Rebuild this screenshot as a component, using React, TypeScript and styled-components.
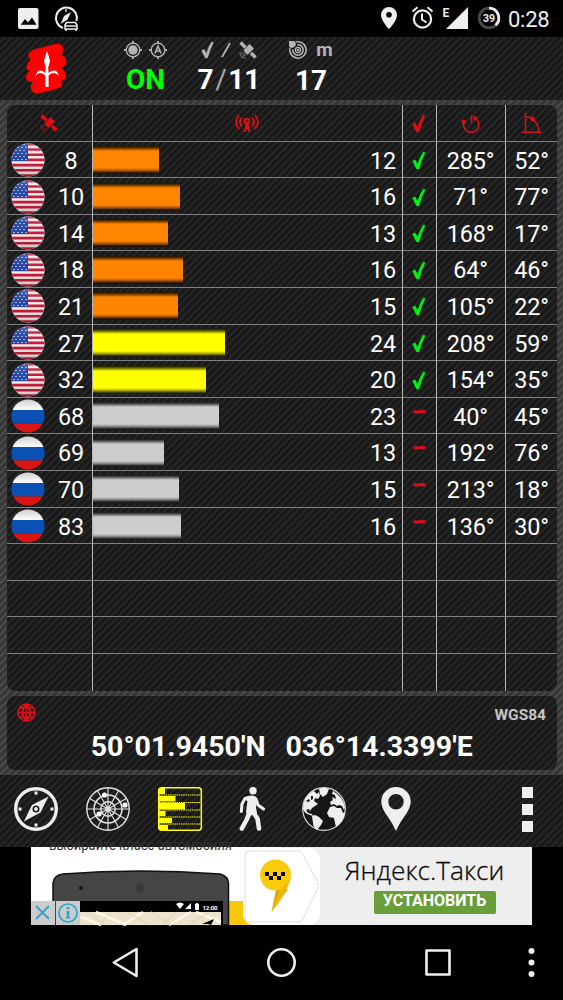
import React from 'react';
import styled, { createGlobalStyle, css } from 'styled-components';

const GlobalStyle = createGlobalStyle`
  * { box-sizing: border-box; }
  body { margin: 0; background: #000; font-family: Roboto, "Noto Sans", sans-serif; color: #fff; }
  svg { display: block; flex: none; overflow: visible; }
`;

const darkStripes = css`
  background: repeating-linear-gradient(135deg, #171717 0, #1b1b1b 2.2px, #292929 3.6px, #272727 4.2px, #171717 5.2px);
`;
const greyStripes = css`
  background: repeating-linear-gradient(135deg, #343434 0, #383838 2.2px, #4e4e4e 3.6px, #4c4c4c 4.2px, #343434 5.2px);
`;

const Screen = styled.div`
  width: 563px;
  height: 1000px;
  display: flex;
  flex-direction: column;
  overflow: hidden;
  background: #000;
`;

const StatusBar = styled.header`
  height: 37px;
  display: flex;
  justify-content: space-between;
  padding: 0 13.5px 0 18px;
`;
const StatusGroup = styled.div<{ $gap: number }>`
  display: flex;
  align-items: center;
  gap: ${(p) => p.$gap}px;
`;
const Clock = styled.span`
  font-size: 22px;
  line-height: 37px;
  letter-spacing: -0.2px;
  padding-top: 2px;
  color: #eee;
`;

const Summary = styled.section`
  ${darkStripes}
  height: 63px;
  display: grid;
  grid-template-columns: 94px 103px 64px 100px;
`;
const LogoCell = styled.div`
  padding: 6px 0 0 25px;
`;
const Stat = styled.div`
  display: flex;
  flex-direction: column;
  align-items: center;
`;
const StatIcons = styled.div<{ $gap: number }>`
  height: 25px;
  display: flex;
  align-items: center;
  justify-content: center;
  gap: ${(p) => p.$gap}px;
  color: #b4b4b4;
  font: bold 19px/25px Roboto, sans-serif;
`;
const StatValue = styled.div<{ $on?: boolean; $drop?: number }>`
  font-weight: bold;
  font-size: 28px;
  line-height: 35px;
  white-space: nowrap;
  padding-top: ${(p) => p.$drop ?? 0}px;
  color: ${(p) => (p.$on ? '#0f0' : '#fff')};
`;
const Slash = styled.span`
  font-weight: 400;
  color: #aaa;
  margin: 0 1.5px;
`;

const Body = styled.main`
  ${greyStripes}
  height: 675px;
  padding: 5px 6px 5px 6.5px;
  display: flex;
  flex-direction: column;
  gap: 5px;
`;
const Panel = styled.section<{ $height: number }>`
  ${darkStripes}
  height: ${(p) => p.$height}px;
  border-radius: 8px;
  overflow: hidden;
`;
const Row = styled.div`
  height: 36.6px;
  display: grid;
  grid-template-columns: 86px 310px 34px 69px 51px;
  border-bottom: 1px solid #808080;
  &:last-child { border-bottom: 0; }
`;
const Cell = styled.div`
  display: flex;
  align-items: center;
  justify-content: center;
  border-right: 1px solid #b8b8b8;
  font-size: 23.4px;
  line-height: 36px;
  letter-spacing: -0.2px;
  min-width: 0;
  padding-top: 1px;
  &:last-child { border-right: 0; padding-left: 1px; }
`;
const IdCell = styled(Cell)`
  justify-content: flex-start;
  padding: 0 0 0 4px;
`;
const SatId = styled.span`
  flex: none;
  width: 53px;
  text-align: center;
  padding-top: 1px;
`;
const SignalCell = styled(Cell)`
  justify-content: space-between;
  padding: 0 5.5px 0 0;
`;
const SignalValue = styled.span`
  padding-top: 1px;
`;
const tones: Record<string, string> = { orange: '#ff8400', yellow: '#ffff00', grey: '#cdcdcd' };
const Bar = styled.div<{ $tone: string }>`
  height: 28px;
  background: linear-gradient(
    rgba(0, 0, 0, 0.9) 0, rgba(0, 0, 0, 0.6) 2px, rgba(0, 0, 0, 0.2) 4px, transparent 5px,
    transparent 22px, rgba(0, 0, 0, 0.25) 24px, rgba(0, 0, 0, 0.75) 26.5px, rgba(0, 0, 0, 0.95) 28px
  ), ${(p) => tones[p.$tone]};
`;

const PositionTop = styled.div`
  display: flex;
  justify-content: space-between;
  padding: 7px 11px 0 10.5px;
  height: 32px;
  color: #c4c4c4;
  font: bold 15.5px/24px Roboto, sans-serif;
`;
const Coordinates = styled.div`
  display: flex;
  justify-content: center;
  gap: 20px;
  font-weight: bold;
  font-size: 28.5px;
  line-height: 38px;
  white-space: nowrap;
`;

const Toolbar = styled.nav`
  ${darkStripes}
  height: 72px;
  display: flex;
  justify-content: space-between;
  padding: 0 30px 4px 0;
  align-items: center;
`;
const Tools = styled.div`
  display: flex;
`;
const Tool = styled.div`
  width: 72px;
  height: 44px;
  display: flex;
  justify-content: center;
  align-items: center;
`;
const More = styled.div`
  width: 11px;
  display: flex;
  flex-direction: column;
  gap: 6px;
`;
const MoreDot = styled.i`
  height: 11px;
  background: #eee;
`;

const Ad = styled.aside`
  height: 78px;
  margin: 0 31px;
  display: flex;
  background: #fff;
`;
const AdArt = styled.div`
  width: 289px;
`;
const AdCopy = styled.div`
  width: 212px;
  background: #eee;
  display: flex;
  flex-direction: column;
  align-items: center;
  color: #0a0a0a;
`;
const AdTitle = styled.div`
  font: 300 26.3px/36px "Open Sans", sans-serif;
  -webkit-text-stroke: 0.3px #0a0a0a;
  white-space: nowrap;
  margin: 5px 3px 2.5px 0;
`;
const Install = styled.div`
  width: 122px;
  height: 23px;
  margin-left: 17px;
  border-radius: 2px;
  background: #689f38;
  color: #fff;
  text-align: center;
  font: bold 16px/20px Roboto, sans-serif;
`;
const SystemNav = styled.footer`
  height: 75px;
`;

const UsFlag = () => (
  <svg width="34" height="34" viewBox="0 0 34 34">
    <defs>
      <clipPath id="us"><circle cx="17" cy="17" r="16.6" /></clipPath>
      <linearGradient id="shade" x2="0" y2="1">
        <stop offset="0" stopColor="#fff" stopOpacity=".2" />
        <stop offset=".5" stopOpacity="0" />
        <stop offset="1" stopOpacity=".2" />
      </linearGradient>
    </defs>
    <g clipPath="url(#us)">
      <path fill="#f6f2f2" d="M0 0h34v34H0z" />
      {[0, 1, 2, 3, 4, 5, 6].map((i) => <path key={i} fill="#cc1c3c" d={`M0 ${i * 5.2}h34v2.6H0z`} />)}
      <path fill="#2145a4" d="M0 0h17v18H0z" />
      {[2, 5, 8, 11, 14, 17].map((y, r) =>
        [1, 5, 9, 13].map((x) => <circle key={`${x}-${y}`} cx={x + (r % 2) * 2} cy={y - 0.5} r=".75" fill="#dfe8ff" />))}
      <path fill="url(#shade)" d="M0 0h34v34H0z" />
    </g>
  </svg>
);
const RuFlag = () => (
  <svg width="34" height="34" viewBox="0 0 34 34">
    <defs>
      <clipPath id="ru"><circle cx="17" cy="17" r="16.6" /></clipPath>
      <linearGradient id="ruw" x2="0" y2="1"><stop offset="0" stopColor="#ccc" /><stop offset="1" stopColor="#fff" /></linearGradient>
    </defs>
    <g clipPath="url(#ru)">
      <path fill="url(#ruw)" d="M0 0h34v11H0z" />
      <path fill="#0b50b4" d="M0 11h34v13.500H0z" />
      <path fill="#dd1414" d="M0 24.500h34v10H0z" />
    </g>
  </svg>
);
const Check = ({ color, size = 19 }: { color: string; size?: number }) => (
  <svg width={size * 0.72} height={size} viewBox="0 0 14 19.500">
    <path fill={color} stroke={color} strokeWidth=".3" strokeLinejoin="round" d="M.6 10.600Q1.600 9 3.500 9.200L5.700 13.600Q7.800 6.500 11.300 1.200Q13 .6 13.500 1.800Q9.600 9 7.400 18Q5.400 19.200 4.300 18Z" />
  </svg>
);
const Dash = () => (
  <svg width="13" height="20" viewBox="0 0 13 20"><path fill="#d81016" d="M.6 3.400L12 3Q13.400 4.500 12.200 6.200L1 6.400Q-.3 4.900 .6 3.400Z" /></svg>
);
const Satellite = ({ color }: { color: string }) => (
  <svg width="18" height="18" viewBox="0 0 18 18" fill="none" stroke={color}>
    <path strokeWidth="3.400" d="M1.500 1.500L6.500 6.500M12 12L16.500 16.500" />
    <path fill={color} stroke="none" d="M10.500 3L15 7.500L8.500 14L4.500 9.500Z" />
    <path strokeWidth="1.200" opacity=".5" d="M1 11Q1 17 7 17M3 11Q3.500 14.500 7 15M5 11.500L6.500 13" />
  </svg>
);
const Target = ({ auto }: { auto?: boolean }) => (
  <svg width="18" height="18" viewBox="0 0 18 18" fill="none" stroke="#b4b4b4">
    <circle cx="9" cy="9" r="6.800" strokeWidth="1.300" />
    <path strokeWidth="1.800" d="M9 0v3M9 15v3M0 9h3M15 9h3" />
    {auto ? <path strokeWidth="1.600" d="M5.900 12.500L9 5.200L12.100 12.500M7.200 10h3.600" /> : <circle cx="9" cy="9" r="4.700" fill="#b4b4b4" stroke="none" />}
  </svg>
);
const Accuracy = () => (
  <svg width="18" height="18" viewBox="0 0 18 18" fill="none" stroke="#b4b4b4">
    <path strokeWidth="1.500" d="M7 1A8.200 8.200 0 1 1 1 7" />
    <path strokeWidth="1.500" d="M8.500 3.800A5.200 5.200 0 1 1 3.800 8.500" />
    <circle cx="9" cy="9" r="2.600" strokeWidth="1.200" />
    <circle cx="9" cy="9" r="1" fill="#b4b4b4" />
    <path fill="#b4b4b4" stroke="none" d="M0 0h5.500l1.500 2.500-.5 2-2 2-3 .5L0 5Z" />
  </svg>
);
const Logo = () => (
  <svg width="43" height="51" viewBox="0 0 43 51">
    <path fill="#f00" d="M5 9Q8 6 15 5L30 1Q38 0 38 6L37 12Q43 15 41 20Q40 23 36 25Q42 28 41 34Q40 37 36 38Q39 43 34 45L16 50Q8 52 6 46Q5 43 8 39Q0 39 1 33Q2 30 5 28Q0 27 2 22Q3 18 6 17Q1 12 5 9Z" />
    <path fill="#fff" d="M22 8Q23.500 12 25 18L23.200 24.500L23.600 30Q31 24 34 33Q29 27.500 23.600 32.500V44H20.400V32.500Q14 27.500 10.500 33Q13 24 20.400 30L20.800 24.500L19 18Q20.500 12 22 8Z" />
  </svg>
);

const PictureIcon = () => (
  <svg width="21" height="21" viewBox="0 0 21 21">
    <rect width="20.500" height="21" rx="2" fill="#eee" />
    <path d="M2.800 16.800L7 11l3 3.500 4-5 4.500 7.300z" />
  </svg>
);
const CompassCar = () => (
  <svg width="25" height="25" viewBox="0 0 25 25" fill="none" stroke="#eee">
    <path strokeWidth="2" d="M9 22A10.500 10.500 0 1 1 22.500 15" />
    <path fill="#eee" stroke="none" d="M17 6L13.500 13.500L6.500 18L10 10Z" />
    <path strokeWidth="1.300" d="M12 3v3" />
    <path strokeWidth="1.500" d="M11 19l1.500-2.500h9L23 19v4H11zM12 23v2M22 23v2M11 20h12" />
  </svg>
);
const StatusIcons = () => (
  <svg width="119" height="25" viewBox="381 7 119 25" fill="#eee">
    <path fillRule="evenodd" d="M389 8a8 8 0 0 0-8 8c0 6 8 14 8 14s8-8 8-14a8 8 0 0 0-8-8zm0 5a2.800 2.800 0 1 1 0 5.600 2.800 2.800 0 0 1 0-5.600z" />
    <circle cx="422.500" cy="20" r="8.600" fill="none" stroke="#eee" strokeWidth="2.200" />
    <path fill="none" stroke="#eee" strokeWidth="2" d="M412.500 12.500l5-4.200M432.500 12.500l-5-4.200M422 14.500v6l4.500 3" />
    <text x="442.500" y="17.500" fontSize="12" fontWeight="bold">E</text>
    <path d="M468 8v22h-22z" />
    <circle cx="489" cy="19" r="9.800" fill="none" stroke="#484848" strokeWidth="2.800" />
    <path fill="none" stroke="#eee" strokeWidth="2.800" d="M489 9.200A9.800 9.800 0 0 1 495.500 26.300" />
    <text x="489" y="23" fontSize="10.500" fontWeight="bold" textAnchor="middle">39</text>
  </svg>
);

const Antenna = () => (
  <svg width="24" height="19" viewBox="0 0 24 19" fill="none" stroke="#e60c14" strokeWidth="1.800">
    <path d="M4 1Q-2 8 4 15M7 3.500Q3 8 7 12.500M20 1Q26 8 20 15M17 3.500Q21 8 17 12.500M12 8L9.500 18M12 8L14.500 18M10.500 14h3" />
    <circle cx="12" cy="7" r="2.400" />
  </svg>
);
const Azimuth = () => (
  <svg width="19" height="19" viewBox="0 0 19 19" fill="none" stroke="#c9141a" strokeWidth="1.700">
    <path d="M3 8A7.700 7.700 0 1 0 15.500 5M10.500 1v8" />
    <circle cx="2.800" cy="8" r="2.200" fill="#e60c14" stroke="none" />
    <path fill="#e60c14" stroke="none" d="M12 1.500l5 2.500-4 3z" />
  </svg>
);
const Elevation = () => (
  <svg width="20" height="21" viewBox="0 0 20 21" fill="none" stroke="#c9141a" strokeWidth="1.600">
    <path d="M3.500 0v21M0 19.300h20M10 5.500Q16 10 17 19M3.500 4q4-1 6.500 1.500" />
    <circle cx="10.500" cy="6" r="2.300" fill="#e60c14" stroke="none" />
  </svg>
);
const RedGlobe = () => (
  <svg width="19" height="19" viewBox="0 0 19 19" fill="none" stroke="#e01018" strokeWidth="1.500">
    <circle cx="9.500" cy="9.500" r="8.500" />
    <path d="M9.500 1v17M1 9.500h17M3 4.800h13M3 14.200h13M9.500 1Q1.500 9.500 9.500 18M9.500 1Q17.500 9.500 9.500 18" />
  </svg>
);

const Compass = () => (
  <svg width="44" height="44" viewBox="0 0 44 44" fill="none" stroke="#eee">
    <circle cx="22" cy="22" r="20.300" strokeWidth="3.400" />
    <path strokeWidth="3" d="M22 4.500v3M22 36.500v3M4.500 22h3M36.500 22h3" />
    <path fill="#eee" stroke="none" d="M34.500 9.500L26.500 25.500L9.800 34.500L18 18Z" />
    <circle cx="22" cy="22" r="2.700" fill="#eee" stroke="#1c1c1c" strokeWidth="1.600" />
  </svg>
);
const Radar = () => (
  <svg width="44" height="44" viewBox="0 0 44 44" fill="none" stroke="#e4e4e4" strokeWidth="1.100">
    <circle cx="22" cy="22" r="21.200" strokeWidth="1.400" /><circle cx="22" cy="22" r="14" strokeWidth="1.500" /><circle cx="22" cy="22" r="7.200" strokeWidth="1.500" />
    {[0, 30, 60, 90, 120, 150].map((a) => <path key={a} d="M22 1v42" transform={`rotate(${a} 22 22)`} />)}
    <circle cx="22" cy="22" r="2.800" fill="#ddd" stroke="none" />
    <circle cx="18.500" cy="8" r="2.600" fill="#fff" stroke="none" /><circle cx="39" cy="18" r="2.600" fill="#fff" stroke="none" /><circle cx="13" cy="27" r="2.600" fill="#fff" stroke="none" />
  </svg>
);
const BarsIcon = () => (
  <svg width="44" height="44" viewBox="0 0 44 44" fill="none" stroke="#ff0">
    <rect x=".7" y=".7" width="42.600" height="42.600" rx="3" strokeWidth="1.500" />
    <path strokeDasharray="1.500 .7" strokeWidth="1.100" d="M1 8h42M1 15.500h42M1 23h42M1 30h42M1 37h42" />
    <path fill="#ff0" stroke="none" d="M1 1h6v6H1zM1 9h16.500v5.500H1zM1 16h26v6.500H1zM1 24h6.500v5H1zM1 31h13v5H1zM1 38h9v5H1z" />
  </svg>
);
const Walker = () => (
  <svg width="26" height="44" viewBox="0 0 26 44" fill="none" stroke="#eee" strokeLinecap="round" strokeLinejoin="round">
    <circle cx="14" cy="3.700" r="3.700" fill="#eee" stroke="none" />
    <path fill="#eee" strokeWidth="2" d="M6 11Q9 9.500 13 9.500Q16 9.500 17 12L16 21L17 26L9 28L8 25L9.500 14Z" />
    <path strokeWidth="3" d="M6 11.500L3 17L2.300 24.500M17 12L19 18L24.500 22" />
    <path strokeWidth="4.600" d="M10 27L7.500 33L2.800 41.500M14.500 26L18.500 31.500L20 41.500" />
  </svg>
);
const Globe = () => (
  <svg width="44" height="44" viewBox="0 0 44 44">
    <circle cx="22" cy="22" r="21.300" fill="#161616" stroke="#d8d8d8" strokeWidth="1.200" />
    <path fill="#eee" d="M1 22Q1 12 8 6L12 4L15 7L17 5L18 9L16 12L13 11L12 14L16 17L13 19L10 21L8 24L7 22L4 23L6 26L10 27L11 29L8 28Q3 27 1 22Z" />
    <path fill="#eee" d="M17 1.500Q22 0 27 2L25 7L21 10L18 7Z" />
    <path fill="#eee" d="M10 29L13 28L17 30L21 34L19 38L15 43Q11 40 11 36Z" />
    <path fill="#eee" d="M31 4Q41 10 43 20L42 23L40 19L37 18L35 19L32 17L29 18L28 15L31 13L30 10L34 12L33 8L30 7Z" />
    <path fill="#eee" d="M28 20L32 19L35 21L39 21L41 26L43 25Q42 35 34 40L33 36L32 31L27 30L25 26Z" />
    <path fill="#161616" d="M4 14l3-2 1 2-2 1zM9 9l2 0 0 3-2 1z" />
  </svg>
);
const Pin = () => (
  <svg width="30" height="44" viewBox="0 0 30 44">
    <path fill="#eee" fillRule="evenodd" d="M15 0A14.700 14.700 0 0 0 .3 14.700C.3 24 9 30 15 44C21 30 29.700 24 29.700 14.700A14.700 14.700 0 0 0 15 0ZM15 7a7.700 7.700 0 1 1 0 15.400A7.700 7.700 0 0 1 15 7Z" />
  </svg>
);

const AdPicture = () => (
  <svg width="289" height="78" viewBox="0 0 289 78">
    <text x="18" y="2.500" fontSize="14.200" textLength="183" lengthAdjust="spacingAndGlyphs" fill="#333" fontFamily="Roboto">выбирайте класс автомобиля</text>
    <path fill="#f9c80c" d="M198 54h91v24h-91z" />
    <path fill="#eee" d="M250 0h39v78h-39z" />
    <path fill="#454545" stroke="#111" strokeWidth="1.500" d="M22 78V36Q23 28 32 27Q108 21 189 27Q197 29 197.500 36V78Z" />
    <circle cx="50" cy="41" r="2" fill="#151515" /><circle cx="109" cy="41" r="4" fill="#383838" />
    <path d="M30 54h162v24H30z" />
    <path fill="#ece3cd" d="M48 65h142v13H48z" />
    <path fill="none" stroke="#fff8e8" strokeWidth="2.500" d="M50 70l20 8M65 65l30 13M112 65l-20 13M160 65l-22 13M165 65l25 10" />
    <path fill="none" stroke="#f2d6ae" strokeWidth="1.500" d="M97 66l20 11M120 65l20 13" />
    <path fill="none" stroke="#d9d0be" d="M55 65l20 13M80 65l-12 13M145 65l-15 13M178 65l-20 13" />
    <path d="M183 72l-12 5h6l3 1z" />
    <path fill="#fff" d="M145 57q4-3 8 0l-4 5zM160 56v6h-6zM164 57h1v-1h2v1h1v6h-4z" />
    <text x="171.500" y="62.500" fontSize="6.200" fontWeight="bold" fill="#fff" textLength="15">12:00</text>
    <rect x="212" y="1" width="77" height="77" rx="11" fill="#fff" />
    <path fill="none" stroke="#ddd" d="M218 4h49q3 0 4 2l16 30q1 3 0 5l-15 31q-2 3-5 3h-49q-4 0-4-4V8q0-4 4-4z" />
    <path fill="#dba800" d="M245 43L240.500 65L257 42Z" />
    <circle cx="244.500" cy="28" r="15.500" fill="#f9cb0b" />
    <path fill="#f0b800" d="M249 43L240.500 65Q253 50 259.500 33Z" />
    <path d="M234 25h4v4h4v-4h4v4h4v-4h4v4h-4v4h-4v-4h-4v4h-4v-4h-4z" />
    <path fill="#ccc" d="M0 54h24v24H0zM25 54h24v24H25z" />
    <path fill="none" stroke="#27a8ca" strokeWidth="1.900" d="M5 59l13 13M18 59L5 72" />
    <circle cx="37" cy="66" r="9" fill="none" stroke="#27a8ca" strokeWidth="1.600" />
    <path fill="#27a8ca" d="M35.700 60h2.600v2.200h-2.600zM35 64h3.300v6h1v1.600h-4.500v-1.600h1v-4.400H35z" />
  </svg>
);
const SystemIcons = () => (
  <svg width="563" height="75" viewBox="0 0 563 75" fill="none" stroke="#eee" strokeWidth="2.600" strokeLinejoin="round">
    <path d="M136.500 24v27L113.800 37.500Z" />
    <circle cx="281.500" cy="37.500" r="13.200" />
    <path d="M426.500 25.500h23v24h-23z" />
    <g fill="#eee" stroke="none"><circle cx="531.500" cy="26" r="3" /><circle cx="531.500" cy="37.500" r="3" /><circle cx="531.500" cy="49" r="3" /></g>
  </svg>
);

type Sat = [id: number, width: number, tone: string, snr: number, azimuth: number, elevation: number];
const satellites: Sat[] = [
  [8, 66, 'orange', 12, 285, 52],
  [10, 87.5, 'orange', 16, 71, 77],
  [14, 75.5, 'orange', 13, 168, 17],
  [18, 90.5, 'orange', 16, 64, 46],
  [21, 85, 'orange', 15, 105, 22],
  [27, 132.5, 'yellow', 24, 208, 59],
  [32, 113, 'yellow', 20, 154, 35],
  [68, 126, 'grey', 23, 40, 45],
  [69, 71.5, 'grey', 13, 192, 76],
  [70, 86.5, 'grey', 15, 213, 18],
  [83, 88.5, 'grey', 16, 136, 30],
];

export default function App() {
  return (
    <Screen>
      <GlobalStyle />
      <StatusBar>
        <StatusGroup $gap={15}><PictureIcon /><CompassCar /></StatusGroup>
        <StatusGroup $gap={7.5}><StatusIcons /><Clock>0:28</Clock></StatusGroup>
      </StatusBar>
      <Summary>
        <LogoCell><Logo /></LogoCell>
        <Stat>
          <StatIcons $gap={7}><Target /><Target auto /></StatIcons>
          <StatValue $on>ON</StatValue>
        </Stat>
        <Stat>
          <StatIcons $gap={9}>
            <Check color="#b4b4b4" size={18} />
            <svg width="8" height="16" viewBox="0 0 8 16"><path stroke="#b4b4b4" strokeWidth="1.700" d="M0 15L8 1" /></svg>
            <Satellite color="#b4b4b4" />
          </StatIcons>
          <StatValue>7<Slash>/</Slash>11</StatValue>
        </Stat>
        <Stat>
          <StatIcons $gap={9}><Accuracy />m</StatIcons>
          <StatValue $drop={1}>17</StatValue>
        </Stat>
      </Summary>
      <Body>
        <Panel $height={585.5}>
          <Row>
            <Cell><Satellite color="#e60c14" /></Cell>
            <Cell><Antenna /></Cell>
            <Cell><Check color="#e60c14" /></Cell>
            <Cell><Azimuth /></Cell>
            <Cell><Elevation /></Cell>
          </Row>
          {satellites.map(([id, width, tone, snr, azimuth, elevation]) => (
            <Row key={id}>
              <IdCell>{tone === 'grey' ? <RuFlag /> : <UsFlag />}<SatId>{id}</SatId></IdCell>
              <SignalCell><Bar $tone={tone} style={{ width }} /><SignalValue>{snr}</SignalValue></SignalCell>
              <Cell>{tone === 'grey' ? <Dash /> : <Check color="#00f018" />}</Cell>
              <Cell>{azimuth}°</Cell>
              <Cell>{elevation}°</Cell>
            </Row>
          ))}
          {[0, 1, 2, 3].map((i) => <Row key={i}><Cell /><Cell /><Cell /><Cell /><Cell /></Row>)}
        </Panel>
        <Panel $height={74.5}>
          <PositionTop><RedGlobe /><span>WGS84</span></PositionTop>
          <Coordinates><span>50°01.9450'N</span><span>036°14.3399'E</span></Coordinates>
        </Panel>
      </Body>
      <Toolbar>
        <Tools>
          <Tool><Compass /></Tool>
          <Tool><Radar /></Tool>
          <Tool><BarsIcon /></Tool>
          <Tool><Walker /></Tool>
          <Tool><Globe /></Tool>
          <Tool><Pin /></Tool>
        </Tools>
        <More><MoreDot /><MoreDot /><MoreDot /></More>
      </Toolbar>
      <Ad>
        <AdArt><AdPicture /></AdArt>
        <AdCopy>
          <AdTitle>Яндекс.Такси</AdTitle>
          <Install>УСТАНОВИТЬ</Install>
        </AdCopy>
      </Ad>
      <SystemNav><SystemIcons /></SystemNav>
    </Screen>
  );
}
